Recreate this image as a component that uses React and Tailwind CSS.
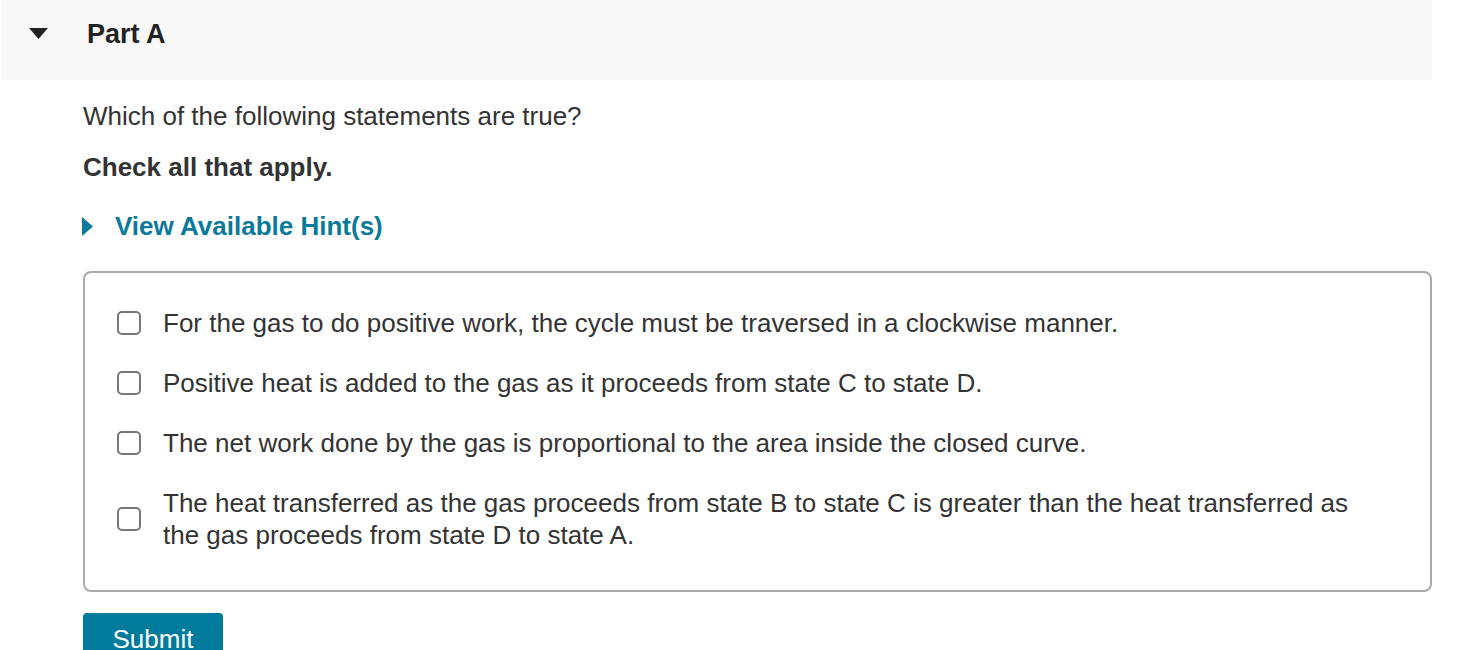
import React, { useState } from "react";

const options = [
  "For the gas to do positive work, the cycle must be traversed in a clockwise manner.",
  "Positive heat is added to the gas as it proceeds from state C to state D.",
  "The net work done by the gas is proportional to the area inside the closed curve.",
  "The heat transferred as the gas proceeds from state B to state C is greater than the heat transferred as the gas proceeds from state D to state A.",
];

const App = () => {
  const [checked, setChecked] = useState([false, false, false, false]);

  const toggle = (i) => {
    const next = [...checked];
    next[i] = !next[i];
    setChecked(next);
  };

  return (
    <div className="min-h-screen bg-white text-[#333] font-['Liberation_Sans',Arial,Helvetica,sans-serif] text-[26px] leading-[32px]">
      {/* part header */}
      <div className="ml-[2px] w-[1430px] h-[80px] bg-[#f8f8f8] flex items-start">
        <svg width="19" height="11" viewBox="0 0 19 11" className="ml-[27px] mt-[28px]">
          <polygon points="0,0 19,0 9.5,11" fill="#222" />
        </svg>
        <h2 className="ml-[39px] mt-[19px] font-bold text-[#222] text-[27px] leading-[30px]">Part A</h2>
      </div>

      <div className="pl-[83px] w-[1432px]">
        <p className="mt-[20px]">Which of the following statements are true?</p>
        <p className="mt-[19px] font-bold">Check all that apply.</p>

        {/* hints toggle */}
        <button className="mt-[27px] flex items-center text-[#0b7a9a] font-bold cursor-pointer">
          <svg width="11" height="19" viewBox="0 0 11 19" className="-ml-[1px]">
            <polygon points="0,0 11,9.5 0,19" fill="#0b7a9a" />
          </svg>
          <span className="ml-[22px]">View Available Hint(s)</span>
        </button>

        {/* answer choices */}
        <div className="mt-[29px] border-2 border-[#aaa] rounded-[8px] pl-[32px] pr-[40px] pt-[34px] pb-[39px] flex flex-col gap-[28px]">
          {options.map((text, i) => (
            <label key={i} className="flex items-center cursor-pointer">
              <span
                onClick={() => toggle(i)}
                className={`shrink-0 w-[24px] h-[24px] border-2 border-[#777] rounded-[5px] ${checked[i] ? "bg-[#0b7a9a]" : "bg-white"}`}
              ></span>
              <span className="ml-[22px]">{text}</span>
            </label>
          ))}
        </div>

        <button className="mt-[21px] w-[140px] h-[52px] bg-[#007b9b] text-white rounded-t-[4px] leading-[52px]">
          Submit
        </button>
      </div>
    </div>
  );
};

export default App;
